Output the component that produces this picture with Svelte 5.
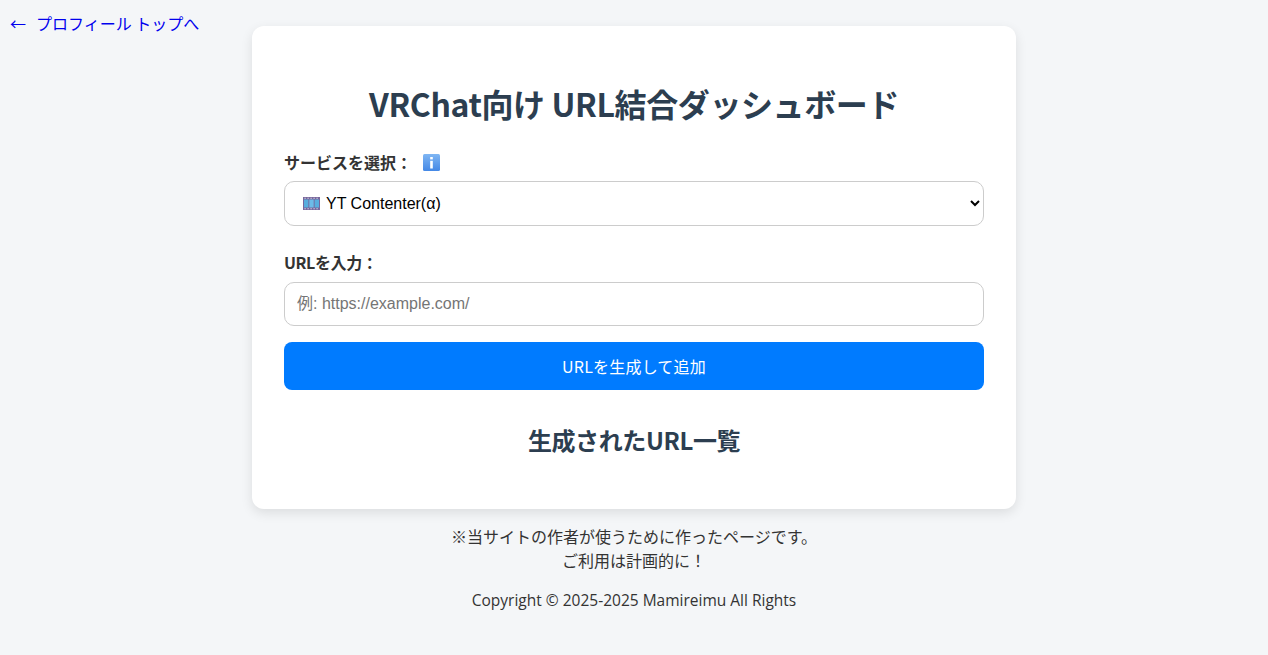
<script>
  const services = ['YT Contenter(α)'];
</script>

<a class="back" href="#top"><span class="arrow">←</span>プロフィール トップへ</a>

<main class="page">
  <section class="card">
    <h1>VRChat向け URL結合ダッシュボード</h1>

    <div class="label-row">
      <label class="label" for="service">サービスを選択：</label>
      <svg class="info" viewBox="0 0 17 17" aria-hidden="true">
        <defs>
          <linearGradient id="infoBg" x1="0" y1="0" x2="0" y2="1">
            <stop offset="0" stop-color="#7fb6f3" />
            <stop offset="1" stop-color="#4488e6" />
          </linearGradient>
        </defs>
        <rect width="17" height="17" rx="1.5" fill="url(#infoBg)" />
        <rect x="7.2" y="3" width="2.6" height="2.4" fill="#fff" />
        <rect x="7.2" y="6.8" width="2.6" height="7.7" fill="#fff" />
      </svg>
    </div>
    <div class="select-wrap">
      <select id="service" class="field select">
        {#each services as s}
          <option>{s}</option>
        {/each}
      </select>
      <svg class="film" viewBox="0 0 17 13" aria-hidden="true">
        <rect width="17" height="13" fill="#77679c" />
        <rect x="1" y="2.5" width="4.4" height="8" fill="#58aede" />
        <rect x="6.3" y="2.5" width="4.4" height="8" fill="#6cbce8" />
        <rect x="11.6" y="2.5" width="4.4" height="8" fill="#58aede" />
        <path d="M1.5 .7h1.2v1.1H1.5zM4.5 .7h1.2v1.1H4.5zM7.5 .7h1.2v1.1H7.5zM10.5 .7h1.2v1.1h-1.2zM13.5 .7h1.2v1.1h-1.2zM1.5 11.2h1.2v1.1H1.5zM4.5 11.2h1.2v1.1H4.5zM7.5 11.2h1.2v1.1H7.5zM10.5 11.2h1.2v1.1h-1.2zM13.5 11.2h1.2v1.1h-1.2z" fill="#e4e0ee" />
      </svg>
    </div>

    <label class="label url-label" for="url">URLを入力：</label>
    <input id="url" class="field input" type="text" placeholder="例: https://example.com/" />

    <button class="submit" type="button">URLを生成して追加</button>

    <h2>生成されたURL一覧</h2>
  </section>

  <footer class="foot">
    <p class="note">※当サイトの作者が使うために作ったページです。<br />ご利用は計画的に！</p>
    <p class="copy">Copyright © 2025-2025 Mamireimu All Rights</p>
  </footer>
</main>

<style>
  :global(body) {
    margin: 0;
    background: #f4f6f8;
    color: #333;
    font-family: "Noto Sans CJK JP", sans-serif;
  }
  .back {
    position: absolute;
    left: 10px;
    top: 12px;
    display: flex;
    align-items: center;
    font-size: 16px;
    line-height: 22px;
    color: #0000ee;
    text-decoration: none;
  }
  .arrow {
    width: 26px;
  }
  .page {
    display: flex;
    flex-direction: column;
    align-items: center;
    padding-top: 26px;
  }
  .card {
    box-sizing: border-box;
    width: 764px;
    height: 483px;
    padding: 52px 32px 0;
    background: #fff;
    border-radius: 12px;
    box-shadow: 0 4px 12px rgba(0, 0, 0, 0.1);
  }
  h1 {
    margin: 0 0 22px;
    font-size: 32px;
    line-height: 50px;
    font-weight: 700;
    letter-spacing: -0.4px;
    text-align: center;
    color: #2c3e50;
  }
  .label-row {
    display: flex;
    align-items: center;
    gap: 11px;
    height: 24px;
    margin-bottom: 7px;
  }
  .label {
    font-size: 16px;
    line-height: 24px;
    font-weight: 700;
    color: #333;
  }
  .info {
    width: 17px;
    height: 17px;
  }
  .select-wrap {
    position: relative;
  }
  .field {
    display: block;
    box-sizing: border-box;
    width: 100%;
    background: #fff;
    border: 1px solid #ccc;
    border-radius: 10px;
    font-size: 16px;
    font-family: "Liberation Sans", "Noto Sans CJK JP", sans-serif;
  }
  .select {
    height: 45px;
    padding: 0 12px 0 37px;
    color: #000;
  }
  .film {
    position: absolute;
    left: 19px;
    top: 16px;
    width: 17px;
    height: 13px;
    pointer-events: none;
  }
  .url-label {
    display: block;
    margin: 24px 0 8px;
    letter-spacing: -0.4px;
  }
  .input {
    height: 44px;
    padding: 0 12px;
  }
  .input::placeholder {
    color: #757575;
  }
  .submit {
    display: block;
    width: 100%;
    height: 48px;
    margin-top: 16px;
    border: none;
    border-radius: 8px;
    background: #007bff;
    color: #fff;
    font-size: 16px;
    letter-spacing: 0.2px;
    font-family: "Noto Sans CJK JP", sans-serif;
  }
  h2 {
    margin: 32px 0 0;
    font-size: 24px;
    line-height: 36px;
    font-weight: 700;
    letter-spacing: -0.4px;
    text-align: center;
    color: #2c3e50;
  }
  .foot {
    text-align: center;
    font-size: 16px;
    line-height: 24px;
    color: #333;
  }
  .note {
    margin: 15px 0 0;
  }
  .copy {
    margin: 16px 0 0;
    font-family: "Open Sans", sans-serif;
    font-size: 15.5px;
  }
</style>
